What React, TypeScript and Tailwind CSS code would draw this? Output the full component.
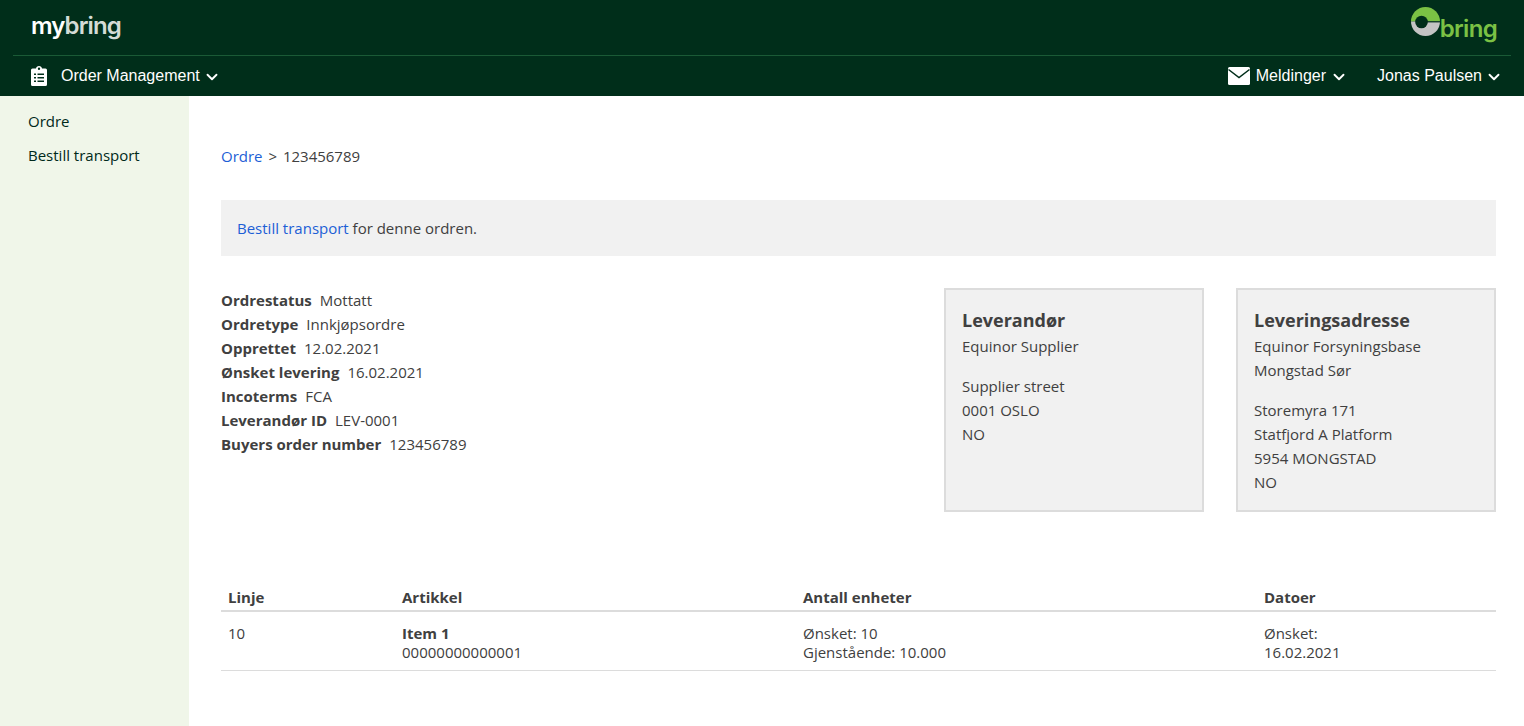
import { ChevronDown } from "lucide-react";

const details = [
  ["Ordrestatus", "Mottatt"],
  ["Ordretype", "Innkjøpsordre"],
  ["Opprettet", "12.02.2021"],
  ["Ønsket levering", "16.02.2021"],
  ["Incoterms", "FCA"],
  ["Leverandør ID", "LEV-0001"],
  ["Buyers order number", "123456789"],
];

function ClipboardIcon() {
  return (
    <svg width="16" height="20" viewBox="0 0 16 20" className="shrink-0">
      <path
        fill="#fff"
        fillRule="evenodd"
        d="M1.5 2.5H5C5.2 1 6.4 0 8 0s2.8 1 3 2.500h3.500A1.500 1.500 0 0 1 16 4v14.500a1.500 1.500 0 0 1-1.500 1.500h-13A1.500 1.500 0 0 1 0 18.500V4a1.500 1.500 0 0 1 1.500-1.500ZM8 1.500a1.200 1.200 0 1 0 0 2.400 1.200 1.200 0 0 0 0-2.400ZM3 7.500V9h2V7.500H3Zm3.500 0V9H13V7.500H6.500ZM3 11v1.500h2V11H3Zm3.500 0v1.500H13V11H6.500ZM3 14.500V16h2v-1.500H3Zm3.500 0V16H13v-1.500H6.500Z"
      />
    </svg>
  );
}

function MailIcon() {
  return (
    <svg width="22" height="18" viewBox="0 0 22 18" className="shrink-0">
      <rect width="22" height="18" rx="1.500" fill="#fff" />
      <path d="M0.500 2.500 11 10.500 21.500 2.500" fill="none" stroke="#002e1a" strokeWidth="1.500" />
    </svg>
  );
}

function BringMark() {
  return (
    <svg width="29" height="29" viewBox="0 0 29 29" className="shrink-0 mb-[10px]">
      <path fill="#7bc144" d="M0 14.500a14.500 14.500 0 0 1 29 0Z" />
      <path fill="#c4c4c4" d="M0 14.500a14.500 14.500 0 0 0 29 0Z" />
      <circle cx="10.500" cy="15" r="6.300" fill="#002e1a" />
      <rect x="14" y="14.200" width="15" height="1.200" fill="#002e1a" />
    </svg>
  );
}

function Box({ title, first, rest }: { title: string; first: string[]; rest: string[] }) {
  return (
    <div className="w-[260px] h-[224px] shrink-0 border-2 border-[#dcdcdc] bg-[#f1f1f1] px-4 pt-4">
      <h2 className="text-[18px] leading-[28px] font-bold">{title}</h2>
      {first.map((l) => (
        <div key={l}>{l}</div>
      ))}
      <div className="mt-4">
        {rest.map((l) => (
          <div key={l}>{l}</div>
        ))}
      </div>
    </div>
  );
}

export default function App() {
  return (
    <div className="h-[726px] overflow-hidden flex flex-col bg-white text-[#404040] text-[15px] leading-6 font-['Open_Sans',sans-serif]">
      <header className="h-24 shrink-0 bg-[#002e1a] px-[13px] text-white font-['Liberation_Sans',sans-serif] text-base">
        <div className="h-14 flex items-center justify-between border-b border-[#1a5a36] pl-[18px] pr-[14px]">
          <span className="text-[24px] font-['Inter',sans-serif] font-semibold tracking-[-0.9px] -mt-1">
            my<span className="text-[#d4dcd6]">bring</span>
          </span>
          <div className="flex items-center -mt-[3px]">
            <BringMark />
            <span className="text-[24px] leading-none font-['Inter',sans-serif] font-semibold tracking-[-0.7px] text-[#7bc144] mt-[6px]">bring</span>
          </div>
        </div>
        <nav className="h-10 flex items-center justify-between pl-[18px] pr-[8px]">
          <div className="flex items-center">
            <ClipboardIcon />
            <span className="ml-[14px]">Order Management</span>
            <ChevronDown size={18} strokeWidth={2.5} className="ml-[3px] mt-[2px]" />
          </div>
          <div className="flex items-center">
            <MailIcon />
            <span className="ml-[6px]">Meldinger</span>
            <ChevronDown size={18} strokeWidth={2.5} className="ml-[4px] mt-[2px]" />
            <span className="ml-[29px]">Jonas Paulsen</span>
            <ChevronDown size={18} strokeWidth={2.5} className="ml-[3px] mt-[2px]" />
          </div>
        </nav>
      </header>

      <div className="flex flex-1">
        <aside className="w-[189px] shrink-0 bg-[#f0f6e9] pl-7 pt-[13px] text-[#00291a]">
          <div className="h-[34px]">Ordre</div>
          <div>Bestill transport</div>
        </aside>

        <main className="flex-1 pl-8 pr-7 pt-12">
          <div>
            <a className="text-[#1d5fd6]">Ordre</a> <span className="mx-[2px]">&gt;</span> 123456789
          </div>

          <div className="mt-8 h-14 flex items-center bg-[#f1f1f1] px-4">
            <span>
              <a className="text-[#1d5fd6]">Bestill transport</a> for denne ordren.
            </span>
          </div>

          <div className="mt-8 flex">
            <dl className="flex-1">
              {details.map(([k, v]) => (
                <div key={k}>
                  <dt className="inline font-bold">{k}</dt>
                  <dd className="inline ml-2">{v}</dd>
                </div>
              ))}
            </dl>
            <div className="flex gap-8">
              <Box title="Leverandør" first={["Equinor Supplier"]} rest={["Supplier street", "0001 OSLO", "NO"]} />
              <Box
                title="Leveringsadresse"
                first={["Equinor Forsyningsbase", "Mongstad Sør"]}
                rest={["Storemyra 171", "Statfjord A Platform", "5954 MONGSTAD", "NO"]}
              />
            </div>
          </div>

          <table className="mt-[71px] w-full table-fixed">
            <thead>
              <tr className="border-b-2 border-[#dcdcdc] font-bold text-left">
                <th className="w-[181px] pl-[7px] h-[28px]">Linje</th>
                <th className="w-[401px] pl-0">Artikkel</th>
                <th className="w-[461px]">Antall enheter</th>
                <th>Datoer</th>
              </tr>
            </thead>
            <tbody>
              <tr className="border-b border-[#dcdcdc] align-top leading-[19px]">
                <td className="pl-[7px] pt-[12px] pb-[8px]">10</td>
                <td className="pt-[12px] pb-[8px]">
                  <div className="font-bold">Item 1</div>
                  <div>00000000000001</div>
                </td>
                <td className="pt-[12px] pb-[8px]">
                  <div>Ønsket: 10</div>
                  <div>Gjenstående: 10.000</div>
                </td>
                <td className="pt-[12px] pb-[8px]">
                  <div>Ønsket:</div>
                  <div>16.02.2021</div>
                </td>
              </tr>
            </tbody>
          </table>
        </main>
      </div>
    </div>
  );
}
